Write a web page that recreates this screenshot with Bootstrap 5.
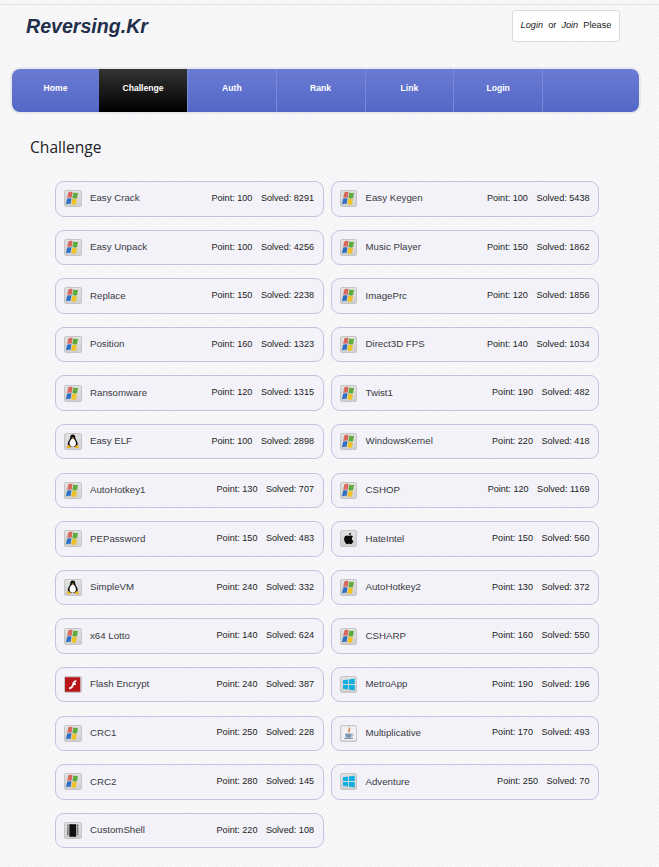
<!DOCTYPE html>
<html lang="en">
<head>
    <meta charset="UTF-8">
    <title>Reversing.Kr</title>
    <meta name="viewport" content="width=device-width, initial-scale=1">
    <link href="https://cdn.jsdelivr.net/npm/bootstrap@5.3.0/dist/css/bootstrap.min.css" rel="stylesheet">
    <style>
        body {
            background-color: #f7f7f9;
            background-image: repeating-linear-gradient(135deg, rgba(255,255,255,.35) 0 1px, rgba(238,238,242,.25) 1px 3px);
            font-family: "Liberation Sans", Arial, sans-serif;
            color: #333;
            padding-top: 4px;
        }
        .top-head {
            border-top: 1px solid #e2e2e4;
            height: 63px;
            padding: 5px 39px 0 26px;
        }
        .logo-text {
            font-size: 19.6px;
            font-weight: 700;
            font-style: italic;
            color: #1f2f4a;
            margin-top: 5px;
            line-height: 23px;
        }
        .login-box {
            width: 108px;
            height: 32px;
            background: #fff;
            border: 1px solid #dcdce0;
            border-radius: 3px;
            font-size: 9.2px;
            color: #222;
            word-spacing: 2.5px;
        }
        .menu-wrap {
            margin: 0 18px 0 10px;
            border: 2px solid #e9e9ed;
            border-radius: 10px;
        }
        .menu-bar {
            height: 43px;
            border-radius: 8px;
            overflow: hidden;
            background: linear-gradient(#6b7bd3, #5368c6);
        }
        .menu-bar .nav-item {
            width: 88.75px;
            border-right: 1px solid #7b8ad8;
        }
        .menu-bar .nav-item:first-child {
            width: 87px;
            border-right: 0;
        }
        .menu-bar .nav-link {
            height: 43px;
            padding: 0;
            line-height: 39px;
            text-align: center;
            font-size: 8.6px;
            font-weight: 700;
            color: #fff;
        }
        .menu-bar .nav-item.on {
            width: 89px;
            background: linear-gradient(#343434, #000);
        }
        .page-title {
            font-family: "Open Sans", sans-serif;
            font-size: 15.6px;
            font-weight: 400;
            color: #222;
            margin: 23px 0 24px 30px;
            line-height: 20px;
        }
        .chal-grid {
            display: grid;
            grid-template-columns: 268.5px 268.5px;
            column-gap: 7px;
            row-gap: 13.1px;
            margin-left: 55px;
        }
        .chal-item {
            height: 35.5px;
            background: #f2f2f8;
            border: 1px solid #c5c1de;
            border-radius: 9px;
            padding: 0 8.5px 0 8px;
            font-size: 9.7px;
            color: #3a3a44;
        }
        .chal-stat {
            font-size: 9.1px;
            color: #222;
        }
        .chal-stat span + span {
            margin-left: 8.5px;
        }
        .ico-tile {
            width: 17.5px;
            height: 17px;
            background: linear-gradient(#e2e2e2, #cfcfcf);
            border: 1px solid #c6c6c6;
            border-radius: 2px;
            margin-right: 8.5px;
        }
        .ico-tile svg {
            display: block;
            width: 15.5px;
            height: 15px;
        }
    </style>
</head>
<body>
<svg width="0" height="0" class="position-absolute">
    <symbol id="i-win" viewBox="0 0 16 15">
        <path d="M3.400 1.200c1.400-.8 2.900-.7 4.400-.1L6.800 6.900C5.300 6.300 3.800 6.200 2.300 7z" fill="#d9685f"/>
        <path d="M8.600 1.300c1.600.6 3.100.7 4.900-.1l-1.100 5.700c-1.600.8-3.200.7-4.800.2z" fill="#5faa3c"/>
        <path d="M2.200 7.700c1.500-.8 3-.7 4.500-.1l-1 5.700c-1.500-.6-3.100-.7-4.700.2z" fill="#2f6fc4"/>
        <path d="M7.500 7.800c1.600.6 3.100.7 4.800-.1l-1 5.700c-1.700.8-3.300.7-4.800.1z" fill="#f0c228"/>
    </symbol>
    <symbol id="i-tux" viewBox="0 0 16 15">
        <path d="M8 .3c-2.100 0-2.800 1.600-2.600 3.200.1 1.300-2.200 3.400-2.500 5.800-.2 1.700.9 3.200 1.900 3.800h6.400c1-.6 2.100-2.100 1.900-3.800-.3-2.400-2.600-4.500-2.500-5.800C10.800 1.900 10.100.3 8 .3z" fill="#111"/>
        <path d="M8 4.500c-1.500 0-3.300 2.800-3.300 5.100 0 1.900 1.400 3.200 3.300 3.200s3.300-1.300 3.300-3.200c0-2.300-1.800-5.100-3.300-5.100z" fill="#fff"/>
        <path d="M6.700 3.400h2.600L8 4.800z" fill="#eab320"/>
        <path d="M2.400 11.700c1.100-.8 2.400-.5 3.800 1.700-1.100 1.100-2.900 1-4.600.5.300-.7.600-1.400.8-2.200zM13.600 11.700c-1.100-.8-2.400-.5-3.800 1.700 1.100 1.100 2.900 1 4.600.5-.3-.7-.6-1.400-.8-2.200z" fill="#eab320"/>
    </symbol>
    <symbol id="i-apple" viewBox="1 1 14 13">
        <path d="M10.800 7.800c0-1.300 1-1.900 1.100-2-.6-.9-1.500-1-1.900-1-.8-.1-1.600.5-2 .5s-1-.5-1.700-.5c-.9 0-1.700.5-2.100 1.300-.9 1.600-.2 3.900.7 5.200.4.600.9 1.300 1.600 1.300.6 0 .9-.4 1.700-.4s1 .4 1.700.4 1.100-.6 1.600-1.300c.5-.7.700-1.400.7-1.500-.1 0-1.400-.5-1.400-2zM9.500 3.900c.4-.4.600-1 .5-1.600-.5 0-1.100.3-1.500.8-.3.4-.6 1-.5 1.500.6.100 1.200-.3 1.500-.7z" fill="#0a0a0a"/>
    </symbol>
    <symbol id="i-flash" viewBox="0 0 16 15">
        <rect x="0" y="0" width="16" height="15" fill="#b8151b"/>
        <path d="M11.800 3c-2.600.1-3.500 1.300-4.200 3.800-.5 2-1.100 3.600-3.400 3.800v1.700c3.300-.2 4.400-2.100 5-4.300h2.100V6.300H9.800c.4-1 .9-1.500 2-1.600z" fill="#fff"/>
    </symbol>
    <symbol id="i-metro" viewBox="0 0 16 15">
        <path d="M2 3.200l5.300-.8v4.600H2zM8.200 2.300l6-1v5.700h-6zM2 8h5.300v4.600L2 11.800zM8.200 8h6v5.700l-6-1z" fill="#12aee2"/>
    </symbol>
    <symbol id="i-java" viewBox="0 0 16 15">
        <rect x=".5" y=".5" width="15" height="14" fill="#f1f1f4"/>
        <path d="M8.500 1.500c1 1.500-1.700 2.300-.8 4 .2-.9 1.800-1.500 1.200-3.300zM8.800 4.200c-.7 1-.5 1.500-.1 2.200" fill="none" stroke="#d0651c" stroke-width=".9"/>
        <path d="M4.500 7.500h6.300v2.300c0 1.200-1 1.900-2 1.900H6.500c-1 0-2-.7-2-1.900z" fill="#7a97b2"/>
        <path d="M10.800 8.200h1.100c1 0 1 1.800-.2 1.800h-1" fill="none" stroke="#7a97b2" stroke-width=".8"/>
        <path d="M3.400 12.400h8.800" stroke="#52708c" stroke-width="1"/>
    </symbol>
    <symbol id="i-film" viewBox="0 0 16 15">
        <rect x="4.500" y="1" width="7" height="13" fill="#111"/>
        <path d="M3 1.500v12M13 1.500v12" stroke="#222" stroke-width="1.600" stroke-dasharray="1 1"/>
    </symbol>
</svg>

<header class="top-head d-flex justify-content-between align-items-start">
    <div class="logo-text">Reversing.Kr</div>
    <div class="login-box d-flex align-items-center justify-content-center"><span><i>Login</i> or <i>Join</i> Please</span></div>
</header>

<div class="menu-wrap">
    <ul class="nav menu-bar">
        <li class="nav-item"><a class="nav-link" href="#">Home</a></li>
        <li class="nav-item on"><a class="nav-link" href="#">Challenge</a></li>
        <li class="nav-item"><a class="nav-link" href="#">Auth</a></li>
        <li class="nav-item"><a class="nav-link" href="#">Rank</a></li>
        <li class="nav-item"><a class="nav-link" href="#">Link</a></li>
        <li class="nav-item"><a class="nav-link" href="#">Login</a></li>
    </ul>
</div>

<h2 class="page-title">Challenge</h2>

<div class="chal-grid" id="chalGrid"></div>

<script src="https://cdn.jsdelivr.net/npm/bootstrap@5.3.0/dist/js/bootstrap.bundle.min.js"></script>
<script>
    const challenges = [
        ["win", "Easy Crack", 100, 8291], ["win", "Easy Keygen", 100, 5438],
        ["win", "Easy Unpack", 100, 4256], ["win", "Music Player", 150, 1862],
        ["win", "Replace", 150, 2238], ["win", "ImagePrc", 120, 1856],
        ["win", "Position", 160, 1323], ["win", "Direct3D FPS", 140, 1034],
        ["win", "Ransomware", 120, 1315], ["win", "Twist1", 190, 482],
        ["tux", "Easy ELF", 100, 2898], ["win", "WindowsKernel", 220, 418],
        ["win", "AutoHotkey1", 130, 707], ["win", "CSHOP", 120, 1169],
        ["win", "PEPassword", 150, 483], ["apple", "HateIntel", 150, 560],
        ["tux", "SimpleVM", 240, 332], ["win", "AutoHotkey2", 130, 372],
        ["win", "x64 Lotto", 140, 624], ["win", "CSHARP", 160, 550],
        ["flash", "Flash Encrypt", 240, 387], ["metro", "MetroApp", 190, 196],
        ["win", "CRC1", 250, 228], ["java", "Multiplicative", 170, 493],
        ["win", "CRC2", 280, 145], ["metro", "Adventure", 250, 70],
        ["film", "CustomShell", 220, 108]
    ];

    document.getElementById("chalGrid").innerHTML = challenges.map(c => `
        <a class="chal-item d-flex align-items-center text-decoration-none" href="#">
            <span class="ico-tile flex-shrink-0"><svg><use href="#i-${c[0]}"></use></svg></span>
            <span class="flex-grow-1">${c[1]}</span>
            <span class="chal-stat"><span>Point: ${c[2]}</span><span>Solved: ${c[3]}</span></span>
        </a>`).join("");
</script>
</body>
</html>
